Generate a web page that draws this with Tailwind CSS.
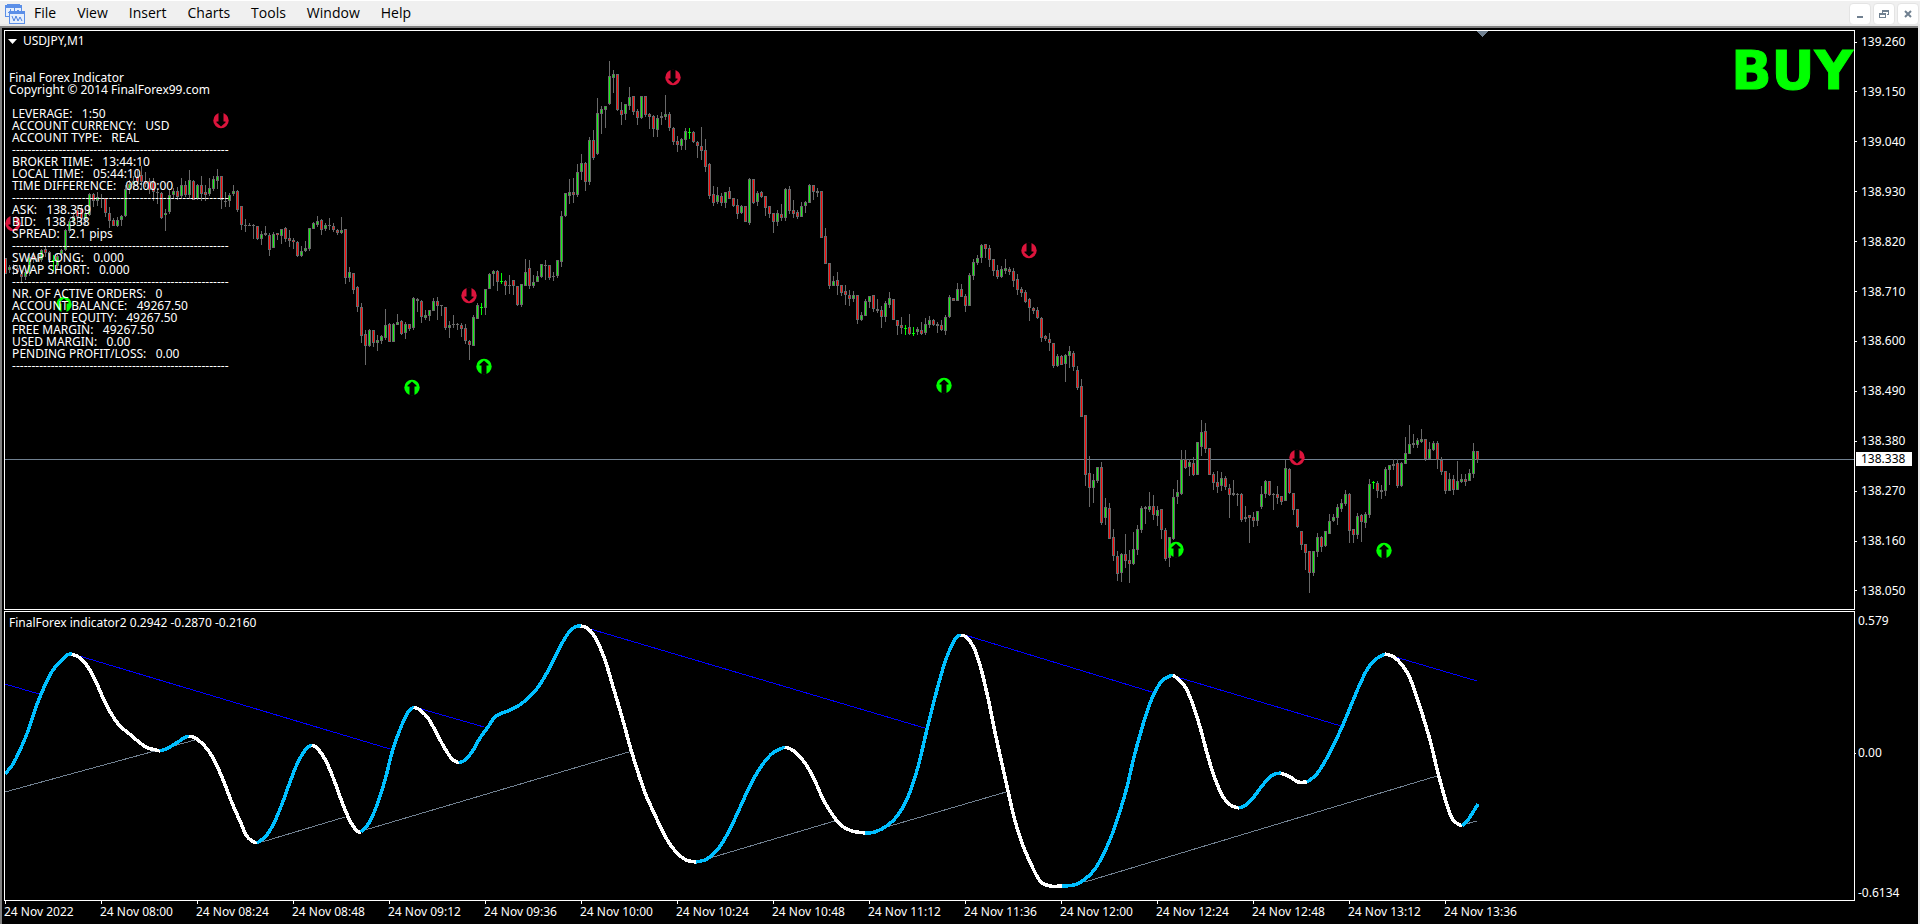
<!DOCTYPE html>
<html lang="en">
<head>
<meta charset="utf-8">
<title>USDJPY,M1</title>
<script src="https://cdn.jsdelivr.net/npm/@tailwindcss/browser@4"></script>
</head>
<body class="flex h-screen min-h-[600px] flex-col overflow-hidden bg-black font-['Noto_Sans','Open_Sans',sans-serif] text-xs text-white">

<header class="flex h-[26px] shrink-0 items-center border-t border-white bg-[#f0f0f0] pl-[5px] text-black">
  <svg class="size-5 shrink-0" viewBox="0 0 20 20" shape-rendering="crispEdges" aria-hidden="true">
    <rect x="0" y="1" width="17" height="12" fill="#5b8fe8"/><rect x="2" y="0" width="13" height="1" fill="#5b8fe8"/>
    <rect x="1" y="4" width="15" height="8" fill="#e6effc"/>
    <path d="M3 8h3M5 5v5M8 7h3M9 4v5M12 6h2" stroke="#5b8fe8" fill="none"/>
    <rect x="4" y="7" width="16" height="13" fill="#5b8fe8"/>
    <rect x="5" y="10" width="14" height="9" fill="#e6effc"/>
    <path d="M7 12l2 5 2-5 2 5 2-4 2 4" stroke="#4a80e0" fill="none" shape-rendering="auto"/>
  </svg>
  <nav class="flex flex-1 items-center gap-[21px] pb-[2px] pl-[9px] font-['Open_Sans','Noto_Sans',sans-serif] text-sm leading-5" aria-label="Main menu">
    <button>File</button>
    <button>View</button>
    <button>Insert</button>
    <button>Charts</button>
    <button>Tools</button>
    <button>Window</button>
    <button>Help</button>
  </nav>
  <div class="flex gap-[2px] pr-px">
    <button class="grid size-[22px] place-items-center rounded-sm border border-[#e4e4e4] bg-white" aria-label="Minimize">
      <svg class="size-3" viewBox="0 0 12 12" shape-rendering="crispEdges"><rect x="3" y="8" width="6" height="2" fill="#708090"/></svg>
    </button>
    <button class="grid size-[22px] place-items-center rounded-sm border border-[#e4e4e4] bg-white" aria-label="Restore">
      <svg class="size-3" viewBox="0 0 12 12" shape-rendering="crispEdges" fill="#708090"><path d="M4 2h7v5h-2v-1h1v-2h-5v1h-1zM1 5h7v5h-7zM2 7v2h5v-2z" fill-rule="evenodd"/></svg>
    </button>
    <button class="grid size-[22px] place-items-center rounded-sm border border-[#e4e4e4] bg-white" aria-label="Close">
      <svg class="size-3" viewBox="0 0 12 12"><path d="M3 3l6 6M9 3l-6 6" stroke="#708090" stroke-width="2"/></svg>
    </button>
  </div>
</header>

<main class="mr-[2px] flex min-h-0 flex-1 flex-col border-t-2 border-l-2 border-[#808080] bg-black pt-[2px] pl-[2px] outline-2 outline-[#e8e8e8]">
  <div class="flex min-h-0 flex-1 flex-col gap-px">

    <section class="flex min-h-0 flex-[2_1_0px]" aria-label="Price chart">
      <div class="relative min-w-0 flex-1 border border-white">
        <svg class="absolute inset-0 size-full" viewBox="5 31 1849 578" preserveAspectRatio="none" shape-rendering="crispEdges" aria-hidden="true">
          <path d="M5 459.5H1854" stroke="#708090"/>
          <path id="outline" fill="#696969"/>
          <path id="bull" fill="#10f010"/>
          <path id="bear" fill="#ff0808"/>
          <path id="doji" fill="#00ff00"/>
          <path d="M1477 31h11l-5 6h-1z" fill="#708090"/>
          <g id="signals" shape-rendering="auto"></g>
        </svg>
        <div class="absolute inset-x-1 top-1 flex items-center gap-[6px] text-xs leading-3">
          <svg class="ml-[-1px] h-[5px] w-[9px]" viewBox="0 0 9 5"><path d="M0 0h9l-4.500 5z" fill="#fff"/></svg>
          <h1>USDJPY,M1</h1>
        </div>
        <pre class="absolute top-[41px] left-1 font-['Noto_Sans','Open_Sans',sans-serif] text-xs leading-3">Final Forex Indicator
Copyright © 2014 FinalForex99.com

 LEVERAGE:   1:50
 ACCOUNT CURRENCY:   USD
 ACCOUNT TYPE:   REAL
 --------------------------------------------------------
 BROKER TIME:   13:44:10
 LOCAL TIME:   05:44:10
 TIME DIFFERENCE:   08:00:00
 --------------------------------------------------------
 ASK:   138.359
 BID:   138.338
 SPREAD:   2.1 pips
 --------------------------------------------------------
 SWAP LONG:   0.000
 SWAP SHORT:   0.000
 --------------------------------------------------------
 NR. OF ACTIVE ORDERS:   0
 ACCOUNT BALANCE:   49267.50
 ACCOUNT EQUITY:   49267.50
 FREE MARGIN:   49267.50
 USED MARGIN:   0.00
 PENDING PROFIT/LOSS:   0.00
 --------------------------------------------------------</pre>
        <strong class="absolute top-[12px] right-px font-['DejaVu_Sans',sans-serif] text-[53px] leading-[56px] font-bold text-[#00ff00] [-webkit-text-stroke:1px_#00ff00]">BUY</strong>
      </div>
      <div class="relative w-[63px] shrink-0">
        <ol class="flex h-full flex-col justify-between pt-[5px] pb-[12px] leading-[14px]">
          <li class="flex items-center gap-1 before:h-px before:w-[2px] before:bg-white">139.260</li>
          <li class="flex items-center gap-1 before:h-px before:w-[2px] before:bg-white">139.150</li>
          <li class="flex items-center gap-1 before:h-px before:w-[2px] before:bg-white">139.040</li>
          <li class="flex items-center gap-1 before:h-px before:w-[2px] before:bg-white">138.930</li>
          <li class="flex items-center gap-1 before:h-px before:w-[2px] before:bg-white">138.820</li>
          <li class="flex items-center gap-1 before:h-px before:w-[2px] before:bg-white">138.710</li>
          <li class="flex items-center gap-1 before:h-px before:w-[2px] before:bg-white">138.600</li>
          <li class="flex items-center gap-1 before:h-px before:w-[2px] before:bg-white">138.490</li>
          <li class="flex items-center gap-1 before:h-px before:w-[2px] before:bg-white">138.380</li>
          <li class="flex items-center gap-1 before:h-px before:w-[2px] before:bg-white">138.270</li>
          <li class="flex items-center gap-1 before:h-px before:w-[2px] before:bg-white">138.160</li>
          <li class="flex items-center gap-1 before:h-px before:w-[2px] before:bg-white">138.050</li>
        </ol>
        <span class="absolute left-px w-14 -translate-y-1/2 bg-white pl-[5px] leading-[14px] text-black" style="top:74%">138.338</span>
      </div>
    </section>

    <section class="flex min-h-0 flex-[1_1_0px]" aria-label="FinalForex indicator2">
      <div class="relative min-w-0 flex-1 border border-white">
        <svg class="absolute inset-0 size-full" viewBox="5 612 1849 288" preserveAspectRatio="none" shape-rendering="crispEdges" fill="none" aria-hidden="true">
          <path stroke="#0000ff" d="M5 684L39 694M76 655L390 749M418 708L484 727M587 628L928 729M965 635L1155 693M1177 677L1341 726M1392 656L1477 681"/>
          <path stroke="#708090" d="M5 792L195 740M262 842L345 817M365 830L632 751M700 861L838 820M866 833L1006 792M1085 882L1437 776M1462 825L1477 821"/>
          <g id="wave" stroke-width="3.500" stroke-linejoin="round"></g>
        </svg>
        <h2 class="absolute top-[4px] left-1 leading-[14px]">FinalForex indicator2 0.2942 -0.2870 -0.2160</h2>
      </div>
      <ol class="flex w-[63px] shrink-0 flex-col justify-between pt-[3px] pb-px leading-[14px]">
        <li class="pl-[3px]">0.579</li>
        <li class="mb-2 flex items-center gap-[2px] before:h-px before:w-px before:bg-white">0.00</li>
        <li class="pl-[3px]">-0.6134</li>
      </ol>
    </section>
  </div>

  <ol class="grid h-[23px] shrink-0 auto-cols-[96px] grid-flow-col overflow-hidden leading-4 whitespace-nowrap">
    <li class="before:ml-px before:block before:h-[3px] before:w-px before:bg-white">24 Nov 2022</li>
    <li class="before:ml-px before:block before:h-[3px] before:w-px before:bg-white">24 Nov 08:00</li>
    <li class="before:ml-px before:block before:h-[3px] before:w-px before:bg-white">24 Nov 08:24</li>
    <li class="before:ml-px before:block before:h-[3px] before:w-px before:bg-white">24 Nov 08:48</li>
    <li class="before:ml-px before:block before:h-[3px] before:w-px before:bg-white">24 Nov 09:12</li>
    <li class="before:ml-px before:block before:h-[3px] before:w-px before:bg-white">24 Nov 09:36</li>
    <li class="before:ml-px before:block before:h-[3px] before:w-px before:bg-white">24 Nov 10:00</li>
    <li class="before:ml-px before:block before:h-[3px] before:w-px before:bg-white">24 Nov 10:24</li>
    <li class="before:ml-px before:block before:h-[3px] before:w-px before:bg-white">24 Nov 10:48</li>
    <li class="before:ml-px before:block before:h-[3px] before:w-px before:bg-white">24 Nov 11:12</li>
    <li class="before:ml-px before:block before:h-[3px] before:w-px before:bg-white">24 Nov 11:36</li>
    <li class="before:ml-px before:block before:h-[3px] before:w-px before:bg-white">24 Nov 12:00</li>
    <li class="before:ml-px before:block before:h-[3px] before:w-px before:bg-white">24 Nov 12:24</li>
    <li class="before:ml-px before:block before:h-[3px] before:w-px before:bg-white">24 Nov 12:48</li>
    <li class="before:ml-px before:block before:h-[3px] before:w-px before:bg-white">24 Nov 13:12</li>
    <li class="before:ml-px before:block before:h-[3px] before:w-px before:bg-white">24 Nov 13:36</li>
  </ol>
</main>

<script>
// One candle per minute: kind (g rising, r falling, n flat, d new doji), high, body top, body bottom, low.
const candles = `r 258 258 274 274,g 265 267 270 273,n 264 267 269 275,r 267 268 272 274,r 270 274 277 282,g 270 272 277 280,g 254 257 273 276,r 252 256 260 263,n 254 258 261 262,g 249 250 260 262,
r 246 249 253 257,r 251 252 260 263,d 255 260 260 271,g 253 256 266 270,g 249 250 254 258,g 229 230 250 251,g 219 221 231 233,g 212 216 221 226,r 205 210 217 224,r 205 208 219 225,
g 210 213 220 225,g 193 194 215 216,r 193 194 201 207,g 192 197 201 206,n 194 198 198 208,r 198 198 213 217,r 207 213 221 228,r 218 220 226 226,g 217 220 226 227,g 215 216 220 226,
g 185 189 216 217,g 180 184 189 194,g 176 181 185 190,r 170 177 182 187,r 166 175 182 190,r 172 181 184 187,r 178 181 190 194,r 178 182 192 201,n 190 192 192 204,r 192 193 218 219,
g 209 213 215 231,g 190 195 212 214,g 188 191 195 199,r 187 191 197 200,g 178 185 196 198,r 181 185 195 197,g 170 180 195 199,r 180 181 200 200,g 184 185 199 200,r 176 185 194 201,
r 185 192 195 201,g 178 188 194 196,g 176 179 189 191,g 169 176 181 189,r 176 176 200 209,n 192 201 201 207,g 193 195 201 207,g 185 191 194 196,r 190 191 210 212,r 206 206 225 230,
n 219 225 225 232,n 223 225 225 226,n 224 225 226 239,r 226 226 239 240,g 231 234 239 245,n 226 233 235 236,r 233 235 250 256,g 232 234 248 248,r 233 233 235 240,g 229 229 236 244,
r 227 228 239 242,r 230 238 241 247,r 238 240 242 249,r 241 242 256 257,g 246 251 256 257,g 241 248 251 252,g 228 228 249 251,g 222 223 229 229,g 216 221 225 227,r 219 220 230 235,
g 223 225 229 231,n 218 225 225 230,r 223 226 230 232,r 229 230 233 235,g 217 230 233 234,r 229 229 278 284,g 267 272 278 282,r 273 273 290 294,r 286 287 307 312,r 303 307 336 343,
r 330 334 346 365,g 329 330 346 347,r 330 330 343 347,g 335 340 343 351,g 335 336 341 344,g 309 325 338 340,r 323 324 342 342,g 323 324 342 342,g 314 322 325 325,r 320 321 334 335,
g 322 324 333 339,r 324 324 329 331,g 297 298 328 330,n 298 299 301 312,r 300 301 317 323,g 310 315 318 320,g 310 310 316 321,g 298 301 311 311,r 297 301 306 320,n 305 305 306 316,
r 307 307 328 330,g 321 325 328 338,n 315 324 325 328,n 323 324 325 330,r 323 325 329 337,r 324 328 341 344,r 340 341 345 360,g 315 317 346 346,g 303 305 319 319,d 303 307 307 315,
g 289 289 308 315,g 273 274 289 289,g 270 271 274 286,r 270 271 282 291,d 273 281 281 284,r 280 281 286 295,n 275 285 285 294,r 280 280 286 295,r 286 286 305 306,g 284 284 305 307,
g 259 272 286 286,r 260 268 286 289,g 275 282 286 288,g 271 276 282 282,g 264 264 277 278,n 260 265 265 280,r 265 265 278 280,n 272 276 276 281,g 260 260 276 278,g 211 216 262 267,
g 193 193 216 217,g 179 192 196 204,r 178 192 195 203,g 164 172 195 197,g 154 163 172 180,r 162 163 182 191,g 137 140 182 185,r 130 140 158 160,g 98 113 154 155,g 106 109 114 134,
g 106 106 110 128,g 61 76 104 105,g 70 74 78 93,r 74 74 110 111,r 102 110 115 125,g 104 104 114 120,g 87 97 106 110,r 96 96 112 115,r 109 111 118 125,g 96 96 118 119,
r 96 96 115 117,r 113 114 117 129,r 115 116 129 137,g 115 118 130 137,n 112 116 118 125,g 95 114 117 120,r 112 114 128 131,r 127 128 142 145,r 136 141 145 152,g 138 139 146 150,
g 128 131 140 150,d 128 132 132 139,r 131 132 142 143,r 141 142 146 158,r 127 146 151 160,r 139 150 167 172,r 163 164 196 199,r 186 194 203 206,g 187 195 202 204,r 193 196 203 206,
g 192 192 203 208,r 187 191 199 199,r 198 198 206 207,r 199 205 214 219,g 205 206 213 214,r 206 206 222 222,g 178 179 223 225,r 179 179 203 204,g 191 193 202 206,r 191 192 197 198,
r 196 196 208 216,r 206 206 214 218,r 213 213 222 233,g 210 213 222 226,r 204 214 218 221,g 188 189 218 221,r 186 189 211 214,r 200 210 214 218,r 210 212 217 219,g 202 206 217 217,
g 201 202 206 213,g 184 185 203 203,r 185 185 192 200,n 188 191 193 197,r 191 191 238 238,r 228 236 264 264,r 263 263 286 289,g 276 281 286 286,r 272 280 286 295,r 285 285 293 296,
r 285 291 295 305,r 290 295 299 306,g 291 295 299 302,r 295 295 320 324,g 312 315 320 321,g 299 301 316 316,g 296 296 302 308,r 295 295 309 312,n 299 309 311 313,r 306 310 317 328,
g 301 303 317 322,g 292 298 305 308,r 299 299 320 320,r 320 320 326 335,r 317 325 328 334,d 325 328 328 335,r 314 327 334 335,d 327 333 333 336,g 327 329 332 335,r 322 330 334 335,
g 318 324 333 335,g 316 320 325 328,r 319 320 325 326,n 322 324 326 333,r 320 325 330 331,g 315 317 331 335,g 295 297 317 318,r 298 298 301 301,g 283 289 301 301,r 284 289 297 297,
r 294 296 306 312,g 273 275 306 306,g 259 262 276 280,g 255 258 263 265,g 244 245 258 263,r 244 244 249 258,r 245 248 260 267,r 259 259 271 276,r 265 270 277 279,g 266 269 277 278,
g 259 268 271 274,r 267 269 272 275,r 268 271 281 287,r 274 279 290 295,r 287 289 293 297,r 290 292 302 303,r 298 299 308 321,r 307 308 311 314,r 307 310 318 319,r 317 318 338 342,
r 335 336 339 341,r 333 339 343 351,r 343 343 366 368,g 354 356 366 367,r 355 356 365 365,g 354 355 364 382,g 346 351 356 368,r 351 353 367 371,r 366 370 388 390,r 379 386 417 417,
r 415 415 475 486,r 456 473 488 507,g 474 480 488 503,g 467 467 481 483,r 462 467 523 525,g 498 507 518 525,r 503 508 539 539,r 529 537 556 561,r 551 556 574 581,g 553 554 573 582,
r 534 554 561 568,r 550 560 564 583,g 532 549 564 565,g 525 529 550 555,g 506 508 530 533,n 506 507 509 524,g 492 506 510 512,r 495 506 515 520,g 506 510 516 526,r 509 509 530 539,
r 528 530 559 561,g 537 537 558 567,g 489 497 539 540,g 480 492 497 504,g 450 459 494 495,r 450 459 468 469,g 459 462 467 476,r 457 463 475 476,g 442 442 475 475,g 420 432 447 456,
r 423 431 449 453,r 448 448 475 475,r 472 474 483 490,r 471 482 487 493,g 472 478 486 491,r 476 478 487 490,r 484 488 495 518,n 480 493 495 496,n 493 494 494 506,r 493 494 520 522,
n 506 517 519 522,r 515 515 518 543,r 512 517 521 527,g 511 511 521 526,g 486 494 507 509,g 480 481 494 498,r 481 481 495 496,n 493 494 495 510,r 486 494 498 504,r 496 496 502 505,
g 460 468 501 501,r 468 469 493 494,r 493 493 510 515,r 509 509 527 528,r 531 531 545 550,r 544 544 553 570,r 551 551 573 593,g 551 551 573 576,g 533 537 552 557,r 536 537 547 552,
g 531 531 546 547,g 514 521 534 534,g 514 517 521 522,g 504 507 518 525,g 499 503 509 512,g 490 494 504 506,r 493 494 531 543,r 529 529 535 543,g 513 516 535 539,r 514 515 522 542,
g 512 514 523 528,g 479 484 515 518,d 481 482 482 489,r 481 483 491 498,n 485 490 492 499,g 467 469 491 496,g 465 465 470 485,n 459 464 466 470,r 459 463 486 488,g 462 463 486 487,
g 437 453 464 464,g 425 444 454 454,n 434 443 445 448,g 438 440 445 448,g 429 439 442 443,r 439 439 459 461,g 442 449 459 459,g 441 443 450 451,r 441 443 460 469,r 457 460 472 475,
r 471 471 491 494,g 473 479 491 491,r 475 479 490 495,g 461 481 490 490,g 474 479 482 483,r 474 479 482 486,g 469 473 481 481,g 443 451 474 478,r 451 451 460 463`.split(',').map(s => s.trim().split(' '));

const box = (x, y, w, h) => `M${x} ${y}h${w}v${h}h-${w}z`;
const paths = { outline: '', bull: '', bear: '', doji: '' };
candles.forEach(([kind, ...v], i) => {
  const [high, top, bottom, low] = v.map(Number), x = 5 + i * 4;
  const frame = kind === 'd' ? 'doji' : 'outline';
  paths[frame] += box(x, high, 1, Math.max(1, low - high)) + box(x - 1, top, 3, Math.max(1, bottom - top));
  if (kind === 'g' || kind === 'r') paths[kind === 'g' ? 'bull' : 'bear'] += box(x, top + 1, 1, Math.max(1, bottom - top - 2));
});
for (const id in paths) document.getElementById(id).setAttribute('d', paths[id]);

// Buy and sell signals: centre of each disc and its direction.
const signals = [[13,223,-1],[64,304,1],[221,120,-1],[412,387,1],[469,295,-1],[484,366,1],[673,77,-1],[944,385,1],[1029,250,-1],[1176,549,1],[1297,457,-1],[1384,550,1]];
document.getElementById('signals').innerHTML = signals.map(([x, y, up]) =>
  `<g transform="translate(${x} ${y + .5}) scale(1 ${up})"><circle r="7.700" fill="${up > 0 ? '#00ff00' : '#dc143c'}"/><path d="M0-6L4.500-2V-1H2.500V8H-2.500V-1H-4.500V-2z" fill="#000"/></g>`).join('');

// Oscillator runs, alternating rising (blue) and falling (white).
const runs = [
  '5,774 13,764 20,750 28,731 36,707 45,685 53,670 60,662 67,655 72,654',
  '72,654 80,658 88,667 96,682 104,700 112,715 120,726 132,736 140,743 148,748 156,750 160,751',
  '160,751 168,748 178,742 184,738 189,736',
  '189,736 197,739 208,750 216,764 224,782 232,803 240,821 246,835 252,841 257,843',
  '257,843 266,836 274,823 282,804 290,782 298,762 306,749 312,745',
  '312,745 318,749 326,761 334,780 342,802 350,821 357,831 361,832',
  '361,832 369,823 377,805 385,780 393,749 401,727 408,712 414,707',
  '414,707 420,710 428,718 436,732 444,747 452,759 459,763',
  '459,763 465,760 472,752 480,738 488,727 496,716 508,711 518,706 526,700 536,690 548,671 556,655 565,638 572,629 578,626 581,626',
  '581,626 587,628 593,634 599,645 606,663 614,690 622,717 632,753 644,790 654,813 666,838 676,852 686,860 696,862',
  '696,862 707,859 718,849 728,833 738,812 748,790 757,773 766,760 774,752 785,747',
  '785,747 794,751 805,763 814,779 824,801 834,817 842,826 852,831 865,833',
  '865,833 875,832 888,825 898,815 908,797 918,767 928,725 938,686 946,659 954,641 958,636 961,635',
  '961,635 966,637 973,646 980,665 988,698 996,737 1004,773 1014,817 1022,843 1030,862 1040,881 1050,886 1062,886',
  '1062,886 1074,885 1084,880 1095,869 1105,851 1113,832 1120,811 1127,787 1134,757 1142,728 1149,706 1157,688 1164,679 1173,675',
  '1173,675 1184,685 1192,702 1200,727 1207,753 1213,773 1220,791 1226,801 1232,806 1239,808',
  '1239,808 1246,805 1253,798 1262,786 1270,777 1275,774 1281,773',
  '1281,773 1290,777 1298,782 1307,782',
  '1307,782 1316,775 1324,763 1332,748 1342,727 1352,703 1360,684 1368,668 1376,659 1385,654',
  '1385,654 1394,657 1402,665 1410,678 1420,707 1430,740 1438,773 1447,805 1453,820 1462,826',
  '1462,826 1468,820 1478,804'
];
const smooth = p => p.slice(1).reduce((d, b, i) => {
  const a = p[i], before = p[i - 1] || a, after = p[i + 2] || b;
  return d + `C${a[0] + (b[0] - before[0]) / 6} ${a[1] + (b[1] - before[1]) / 6} ${b[0] - (after[0] - a[0]) / 6} ${b[1] - (after[1] - a[1]) / 6} ${b[0]} ${b[1]}`;
}, `M${p[0]}`);
document.getElementById('wave').innerHTML = runs.map((r, i) =>
  `<path stroke="${i % 2 ? '#ffffff' : '#00bfff'}" d="${smooth(r.split(' ').map(q => q.split(',').map(Number)))}"/>`).join('');
</script>
</body>
</html>
